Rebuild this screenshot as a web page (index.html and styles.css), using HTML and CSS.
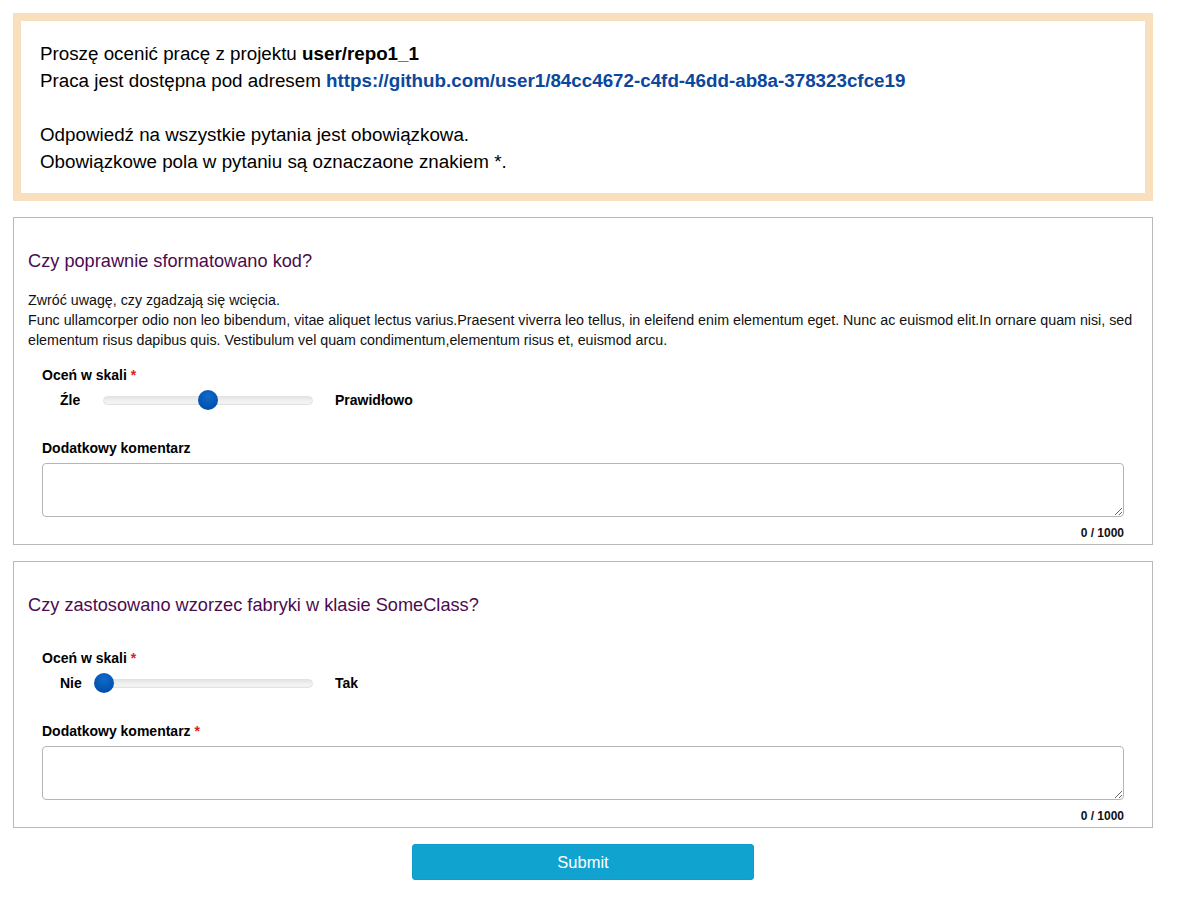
FILE: index.html
```html
<!DOCTYPE html>
<html lang="pl">
<head>
<meta charset="utf-8">
<title>Ocena</title>
<link rel="stylesheet" href="styles.css">
</head>
<body>
<div class="page">
  <div class="intro">
    <div>Proszę ocenić pracę z projektu <b>user/repo1_1</b></div>
    <div>Praca jest dostępna pod adresem <a class="link" href="#">https://github.com/user1/84cc4672-c4fd-46dd-ab8a-378323cfce19</a></div>
    <div class="blank"></div>
    <div>Odpowiedź na wszystkie pytania jest obowiązkowa.</div>
    <div>Obowiązkowe pola w pytaniu są oznaczaone znakiem *.</div>
  </div>

  <div class="card">
    <h2 class="q-title">Czy poprawnie sformatowano kod?</h2>
    <div class="q-desc">Zwróć uwagę, czy zgadzają się wcięcia.<br>Func ullamcorper odio non leo bibendum, vitae aliquet lectus varius.Praesent viverra leo tellus, in eleifend enim elementum eget. Nunc ac euismod elit.In ornare quam nisi, sed elementum risus dapibus quis. Vestibulum vel quam condimentum,elementum risus et, euismod arcu.</div>
    <div class="field rating">
      <div class="label">Oceń w skali <span class="req">*</span></div>
      <div class="slider-row">
        <span class="min">Źle</span>
        <div class="track"><span class="thumb" style="left:50%"></span></div>
        <span class="max">Prawidłowo</span>
      </div>
    </div>
    <div class="field comment">
      <div class="label">Dodatkowy komentarz</div>
      <textarea class="textarea"></textarea>
      <div class="counter">0 / 1000</div>
    </div>
  </div>

  <div class="card">
    <h2 class="q-title">Czy zastosowano wzorzec fabryki w klasie SomeClass?</h2>
    <div class="field rating no-desc">
      <div class="label">Oceń w skali <span class="req">*</span></div>
      <div class="slider-row">
        <span class="min">Nie</span>
        <div class="track"><span class="thumb" style="left:0%"></span></div>
        <span class="max">Tak</span>
      </div>
    </div>
    <div class="field comment">
      <div class="label">Dodatkowy komentarz <span class="req">*</span></div>
      <textarea class="textarea"></textarea>
      <div class="counter">0 / 1000</div>
    </div>
  </div>

  <div class="actions">
    <button class="submit" type="button">Submit</button>
  </div>
</div>
</body>
</html>
```
FILE: styles.css
```css
html, body {
  margin: 0;
  padding: 0;
  background: #ffffff;
}
body {
  font-family: "Liberation Sans", Arial, sans-serif;
  color: #000;
}
.page {
  width: 1140px;
  padding: 13px;
}
.intro {
  border: 8px solid #f8e0bf;
  padding: 19px 19px 18px;
  font-size: 18.8px;
  line-height: 27px;
  margin-bottom: 16px;
}
.blank {
  height: 27px;
}
.link {
  color: #0b479d;
  font-weight: bold;
  text-decoration: none;
}
.card {
  border: 1px solid #b9b9b9;
  padding: 0 14px 4px;
  margin-bottom: 16px;
}
.q-title {
  margin: 33px 0 19px;
  font-size: 18.2px;
  line-height: 20px;
  font-weight: normal;
  color: #4b0b4e;
}
.q-desc {
  font-size: 14.25px;
  line-height: 20px;
  color: #111;
}
.field {
  padding: 0 14px;
}
.rating {
  margin-top: 17px;
}
.rating.no-desc {
  margin-top: 35px;
}
.label {
  font-size: 14px;
  line-height: 16px;
  font-weight: bold;
}
.req {
  color: #e21b1b;
}
.slider-row {
  display: flex;
  align-items: center;
  height: 20px;
  margin-top: 7px;
  font-size: 14px;
  font-weight: bold;
}
.min {
  padding-left: 18px;
  box-sizing: border-box;
  width: 61px;
}
.track {
  position: relative;
  width: 208px;
  height: 7px;
  border: 1px solid #e2e2e2;
  border-radius: 5px;
  background: linear-gradient(#e4e4e4, #f2f2f2 60%);
}
.thumb {
  position: absolute;
  top: 50%;
  width: 20px;
  height: 20px;
  margin: -10px 0 0 -10px;
  border-radius: 50%;
  background: radial-gradient(circle at 50% 30%, #1169cb, #0052ad 70%, #00459a);
}
.max {
  margin-left: 22px;
}
.comment {
  margin-top: 30px;
}
.textarea {
  display: block;
  box-sizing: border-box;
  width: 100%;
  height: 54px;
  margin-top: 7px;
  border: 1px solid #b5b5b5;
  border-radius: 4px;
  font-family: "Liberation Sans", Arial, sans-serif;
  font-size: 14px;
  resize: vertical;
}
.counter {
  margin-top: 9px;
  text-align: right;
  font-size: 12px;
  line-height: 14px;
  font-weight: bold;
  color: #111;
}
.actions {
  display: flex;
  justify-content: center;
}
.submit {
  width: 342px;
  height: 36px;
  border: 1px solid #0f9cc9;
  border-radius: 3px;
  background: #11a3cf;
  color: #fff;
  font-family: "Liberation Sans", Arial, sans-serif;
  font-size: 16.5px;
}
```
